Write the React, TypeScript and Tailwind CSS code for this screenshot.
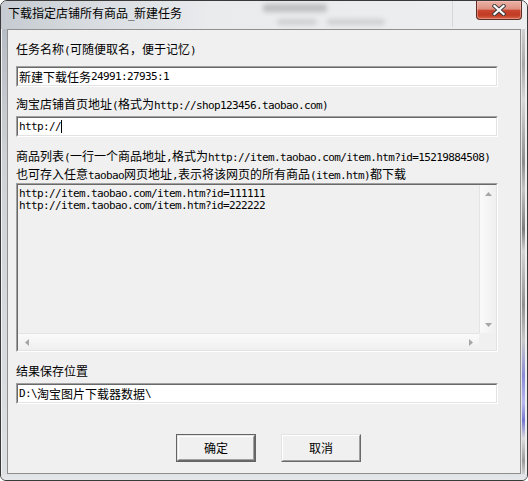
import React from "react";

function T({ text }: { text: string }) {
  const parts = text.match(/[\x00-\x7f]+|[^\x00-\x7f]+/g) || [];
  return (
    <>
      {parts.map((p, i) =>
        p.charCodeAt(0) < 128 ? (
          <span
            key={i}
            className="whitespace-pre font-['DejaVu_Sans_Mono','Liberation_Mono',monospace] text-[11px] tracking-[-0.62px]"
          >
            {p}
          </span>
        ) : (
          <span
            key={i}
            className="font-['Noto_Sans_CJK_SC','Noto_Sans_CJK_JP',sans-serif] text-[12px]"
          >
            {p}
          </span>
        )
      )}
    </>
  );
}

function Line({ text, className = "" }: { text: string; className?: string }) {
  return (
    <div className={`h-[12px] whitespace-nowrap leading-[12px] text-black ${className}`}>
      <T text={text} />
    </div>
  );
}

function Sunken({
  children,
  className = "",
  inner = "",
}: {
  children?: React.ReactNode;
  className?: string;
  inner?: string;
}) {
  return (
    <div
      className={`border border-t-[#a0a0a0] border-l-[#a0a0a0] border-b-white border-r-white ${className}`}
    >
      <div
        className={`h-full border border-t-[#696969] border-l-[#696969] border-b-[#e3e3e3] border-r-[#e3e3e3] ${inner}`}
      >
        {children}
      </div>
    </div>
  );
}

function Input({ text, caret = false, className = "" }: { text: string; caret?: boolean; className?: string }) {
  return (
    <Sunken className={`h-[21px] w-[482px] ${className}`} inner="bg-white">
      <div className="flex h-full items-center whitespace-nowrap pl-[1px] leading-[12px] text-black">
        <T text={text} />
        {caret && <span className="inline-block h-[13px] w-px bg-black" />}
      </div>
    </Sunken>
  );
}

const Up = () => (
  <svg width="7" height="4" viewBox="0 0 7 4">
    <path d="M3.5 0 L7 4 L0 4 Z" fill="#a6a6a6" />
  </svg>
);
const Down = () => (
  <svg width="7" height="4" viewBox="0 0 7 4">
    <path d="M0 0 L7 0 L3.5 4 Z" fill="#a6a6a6" />
  </svg>
);
const Left = () => (
  <svg width="4" height="7" viewBox="0 0 4 7">
    <path d="M4 0 L4 7 L0 3.5 Z" fill="#a6a6a6" />
  </svg>
);
const Right = () => (
  <svg width="4" height="7" viewBox="0 0 4 7">
    <path d="M0 0 L4 3.5 L0 7 Z" fill="#a6a6a6" />
  </svg>
);

function Btn({ label, def = false }: { label: string; def?: boolean }) {
  const body = (
    <div className="h-full border border-t-[#e3e3e3] border-l-[#e3e3e3] border-b-[#696969] border-r-[#696969]">
      <div className="flex h-full items-center justify-center border border-t-white border-l-white border-b-[#a0a0a0] border-r-[#a0a0a0] bg-[#f0f0f0] leading-[12px] text-black">
        <T text={label} />
      </div>
    </div>
  );
  return def ? (
    <div className="h-[28px] w-[80px] border border-[#646464]">{body}</div>
  ) : (
    <div className="h-[28px] w-[80px]">{body}</div>
  );
}

export default function App() {
  return (
    <div className="h-[481px] w-[528px] bg-white">
      <div className="flex h-[481px] w-[528px] flex-col overflow-hidden rounded-t-[7px] rounded-b-[6px] border border-[#3a3a3a] bg-[#e2e5e8]">
        {/* title bar */}
        <div className="relative flex h-[28px] items-start justify-between bg-[linear-gradient(90deg,#c5cbd1_0%,#d9dde1_18%,#e9ebed_40%,#eceef0_100%)]">
          <div className="pl-[7px] pt-[5px]">
            <Line text="下载指定店铺所有商品_新建任务" />
          </div>
          {/* blurred content behind the glass */}
          <div className="pointer-events-none absolute left-[262px] top-[3px] h-[8px] w-[64px] rounded-[3px] bg-[#6a6a6a] opacity-35 blur-[2.5px]" />
          <div className="pointer-events-none absolute left-[276px] top-[18px] h-[6px] w-[40px] rounded-[3px] bg-[#7a7a7a] opacity-25 blur-[2.5px]" />
          <div className="pointer-events-none absolute left-[326px] top-[18px] h-[6px] w-[58px] rounded-[3px] bg-[#7a7a7a] opacity-25 blur-[2.5px]" />
          <div className="pointer-events-none absolute left-[451px] top-[0px] h-[26px] w-px bg-[#d4d8dc]" />
          <div className="relative mr-[5px] flex h-[19px] w-[46px] items-center justify-center rounded-b-[4px] border border-t-0 border-[#5e2b25] bg-[linear-gradient(180deg,#ebb3a7_0%,#de9080_45%,#c9462f_52%,#c23a22_78%,#d46648_100%)] shadow-[inset_0_0_0_1px_rgba(255,200,190,0.45)]">
            <svg width="14" height="12" viewBox="0 0 14 12">
              <path d="M2.5 2 L11.5 10 M11.5 2 L2.5 10" stroke="#3d3d3d" strokeWidth="4.2" strokeLinecap="square" />
              <path d="M2.5 2 L11.5 10 M11.5 2 L2.5 10" stroke="#ffffff" strokeWidth="2.3" strokeLinecap="square" />
            </svg>
          </div>
        </div>

        {/* middle */}
        <div className="flex h-[445px]">
          <div className="flex w-[6px]">
            <div className="w-px bg-[#f2f3f4]" />
            <div className="w-[5px] bg-[linear-gradient(180deg,#b7bdc4_0%,#cfd3d7_30%,#dde0e3_100%)]" />
          </div>

          <div className="flex w-[514px] flex-col border border-[#8f8f8f] bg-[#f0f0f0] pl-[8px]">
            <Line className="mt-[12px]" text="任务名称(可随便取名，便于记忆)" />
            <Input className="mt-[12px]" text="新建下载任务24991:27935:1" />
            <Line className="mt-[10px]" text="淘宝店铺首页地址(格式为http://shop123456.taobao.com)" />
            <Input className="mt-[7px]" text="http://" caret />
            <Line className="mt-[12px]" text="商品列表(一行一个商品地址,格式为http://item.taobao.com/item.htm?id=15219884508)" />
            <Line className="mt-[6px]" text="也可存入任意taobao网页地址,表示将该网页的所有商品(item.htm)都下载" />

            <Sunken className="mt-[4px] h-[169px] w-[482px]" inner="flex flex-col bg-[#f0f0f0]">
              <div className="flex min-h-0 flex-1">
                <div className="flex-1 pl-[1px]">
                  <Line text="http://item.taobao.com/item.htm?id=111111" />
                  <Line text="http://item.taobao.com/item.htm?id=222222" />
                </div>
                <div className="flex w-[17px] flex-col border-l border-[#e4e4e4] bg-[linear-gradient(90deg,#fafafa,#efefef)]">
                  <div className="flex h-[17px] items-center justify-center">
                    <Up />
                  </div>
                  <div className="flex-1" />
                  <div className="flex h-[17px] items-center justify-center">
                    <Down />
                  </div>
                </div>
              </div>
              <div className="flex h-[17px]">
                <div className="flex flex-1 border-t border-[#e4e4e4] bg-[linear-gradient(180deg,#fafafa,#efefef)]">
                  <div className="flex w-[17px] items-center justify-center">
                    <Left />
                  </div>
                  <div className="flex-1" />
                  <div className="flex w-[17px] items-center justify-center">
                    <Right />
                  </div>
                </div>
                <div className="w-[17px] bg-[#f0f0f0]" />
              </div>
            </Sunken>

            <Line className="mt-[12px]" text="结果保存位置" />
            <Input className="mt-[7px]" text="D:\淘宝图片下载器数据\" />

            <div className="mt-[30px] flex gap-[25px] pl-[160px]">
              <Btn label="确定" def />
              <Btn label="取消" />
            </div>
          </div>

          <div className="flex w-[6px]">
            <div className="w-px bg-[#e6e6e6]" />
            <div className="w-[3px] bg-[linear-gradient(180deg,#d0d0d0_0%,#a8a8a8_8%,#d8d8d8_16%,#8c8c8c_30%,#c4c4c4_36%,#7c7c7c_45%,#d4d4d4_50%,#909090_62%,#c8c8c8_70%,#8a8ad8_78%,#b8b8f0_84%,#7676d0_88%,#dcdcdc_92%,#9a9a9a_97%,#d0d0d0_100%)]" />
            <div className="w-[2px] bg-[#eceef0]" />
          </div>
        </div>

        {/* bottom frame */}
        <div className="flex-1 bg-[linear-gradient(180deg,#dfe2e5,#e6e8ea)]" />
      </div>
    </div>
  );
}
